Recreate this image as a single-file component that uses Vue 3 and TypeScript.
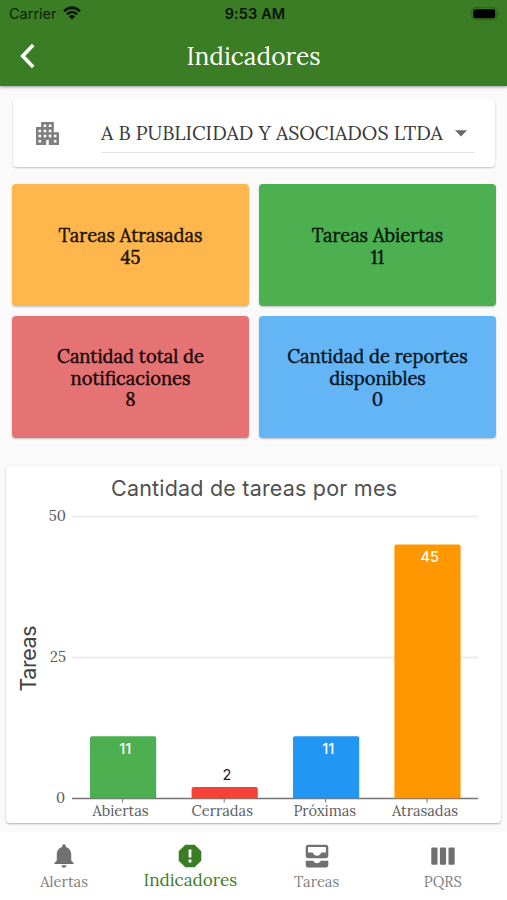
<script setup lang="ts">
interface Tile {
  tone: string
  lines: string[]
  value: number
}

interface Bar {
  label: string
  value: number
  color: string
  x: number
  labelX: number
  labelWidth: number
  inside: boolean
}

const tiles: Tile[] = [
  { tone: 'late', lines: ['Tareas Atrasadas'], value: 45 },
  { tone: 'open', lines: ['Tareas Abiertas'], value: 11 },
  { tone: 'notices', lines: ['Cantidad total de', 'notificaciones'], value: 8 },
  { tone: 'reports', lines: ['Cantidad de reportes', 'disponibles'], value: 0 },
]

const bars: Bar[] = [
  { label: 'Abiertas', value: 11, color: '#4caf50', x: 84, labelX: 86.5, labelWidth: 56, inside: true },
  { label: 'Cerradas', value: 2, color: '#f44336', x: 185.6, labelX: 185.5, labelWidth: 61.5, inside: false },
  { label: 'Próximas', value: 11, color: '#2196f3', x: 287, labelX: 287.5, labelWidth: 62.5, inside: true },
  { label: 'Atrasadas', value: 45, color: '#ff9800', x: 388.4, labelX: 386, labelWidth: 66, inside: true },
]

const baseline = 332.3
const unit = 5.64
const barWidth = 66.2

const topOf = (bar: Bar): number => baseline - bar.value * unit

const barPath = (bar: Bar): string => {
  const top = topOf(bar)
  const right = bar.x + barWidth
  return `M${bar.x} ${baseline}V${top + 2}q0-2 2-2H${right - 2}q2 0 2 2V${baseline}Z`
}
</script>

<template>
  <div class="screen">
    <header class="top">
      <div class="status">
        <div class="carrier">
          <span>Carrier</span>
          <svg width="18" height="14" viewBox="0 0 18 14">
            <g fill="none" stroke="#071203" stroke-width="2.5">
              <path d="M1 5.2Q9-2 17 5.2" />
              <path d="M3.9 8.2Q9 3.8 14.1 8.2" />
            </g>
            <path d="M5.8 10.2Q9 7.6 12.2 10.2L9 13.6Z" fill="#071203" />
          </svg>
        </div>
        <span class="clock">9:53 AM</span>
        <svg class="battery" width="30" height="14" viewBox="0 0 30 14">
          <rect x=".7" y=".7" width="25" height="12" rx="3.5" fill="none" stroke="#2b6119" />
          <rect x="2.2" y="2.2" width="22" height="9" rx="2" fill="#000" />
          <path d="M27.2 4.8q2.2 2 0 4z" fill="#2b6119" />
        </svg>
      </div>
      <div class="appbar">
        <svg class="back" width="16" height="26" viewBox="0 0 16 26">
          <path d="M13.2 1.9 2.7 13 13.2 24.1" fill="none" stroke="#fff" stroke-width="3.6" />
        </svg>
        <h1>Indicadores</h1>
      </div>
    </header>

    <main>
      <section class="picker">
        <svg class="building" viewBox="3 3 18 18">
          <path
            fill="#808080"
            d="M17 11V3H7v4H3v14h8v-4h2v4h8V11h-4zM7 19H5v-2h2v2zm0-4H5v-2h2v2zm0-4H5V9h2v2zm4 4H9v-2h2v2zm0-4H9V9h2v2zm0-4H9V5h2v2zm4 8h-2v-2h2v2zm0-4h-2V9h2v2zm0-4h-2V5h2v2zm4 12h-2v-2h2v2zm0-4h-2v-2h2v2z"
          />
        </svg>
        <div class="field">
          <span>A B PUBLICIDAD Y ASOCIADOS LTDA</span>
          <svg width="12" height="7" viewBox="0 0 12 7"><path d="M0 .3h12L6 6.5z" fill="#666" /></svg>
        </div>
      </section>

      <section class="tiles">
        <article v-for="tile in tiles" :key="tile.tone" class="tile" :class="tile.tone">
          <span v-for="line in tile.lines" :key="line">{{ line }}</span>
          <span>{{ tile.value }}</span>
        </article>
      </section>

      <section class="chart">
        <svg width="496" height="357" viewBox="0 0 496 357">
          <text class="title" x="105" y="30" textLength="286">Cantidad de tareas por mes</text>
          <text class="title side" transform="translate(30 225.5) rotate(-90)" textLength="66">Tareas</text>
          <g stroke="#ececec" stroke-width="2">
            <path d="M66 50.5H472" />
            <path d="M66 191.5H472" />
          </g>
          <g class="tick" text-anchor="end">
            <text x="60" y="54.5">50</text>
            <text x="60" y="196">25</text>
            <text x="59" y="336.5">0</text>
          </g>
          <path d="M66 332.5H472" stroke="#757575" stroke-width="1.6" />
          <g v-for="bar in bars" :key="bar.label">
            <path :d="barPath(bar)" :fill="bar.color" />
            <path :d="`M${bar.x + 32.6} 333v3.5`" stroke="#757575" />
            <text
              class="value"
              :class="{ inside: bar.inside }"
              :x="bar.x + 35.3"
              :y="topOf(bar) + (bar.inside ? 17.5 : -7.5)"
              text-anchor="middle"
            >{{ bar.value }}</text>
            <text class="tick" :x="bar.labelX" y="350" :textLength="bar.labelWidth">{{ bar.label }}</text>
          </g>
        </svg>
      </section>
    </main>

    <nav>
      <a class="item">
        <svg viewBox="2 2.25 20 20">
          <path d="M12 22c1.1 0 2-.9 2-2h-4c0 1.1.89 2 2 2zm6-6v-5c0-3.07-1.64-5.64-4.5-6.32V4c0-.83-.67-1.5-1.5-1.5s-1.5.67-1.5 1.5v.68C7.63 5.36 6 7.92 6 11v5l-2 2v1h16v-1l-2-2z" />
        </svg>
        <span>Alertas</span>
      </a>
      <a class="item active">
        <svg viewBox="0 0 24 24">
          <path fill-rule="evenodd" d="M7.3.7h9.4l6.6 6.6v9.4l-6.6 6.6H7.3L.7 16.7V7.3zM10.6 5.5v8h2.8v-8zm0 10v3h2.8v-3z" />
        </svg>
        <span>Indicadores</span>
      </a>
      <a class="item">
        <svg viewBox="0 0 24 24">
          <path fill-rule="evenodd" d="M3.500.7h17A2.800 2.800 0 0 1 23.300 3.500v8a2.800 2.800 0 0 1-2.800 2.800h-17A2.800 2.800 0 0 1 .7 11.500v-8A2.800 2.800 0 0 1 3.500.7zM3 3.800v4.700h4.700c.7 1.900 2.200 3.200 4.300 3.200s3.600-1.300 4.300-3.200H21V3.800a.8.8 0 0 0-.8-.8H3.800a.8.8 0 0 0-.8.800zM.7 16.700h7.500c.7 1.500 2 2.500 3.800 2.500s3.100-1 3.800-2.500h7.500v4a2.800 2.800 0 0 1-2.800 2.800h-17a2.800 2.800 0 0 1-2.800-2.800z" />
        </svg>
        <span>Tareas</span>
      </a>
      <a class="item">
        <svg viewBox="0 0 24 24">
          <rect x=".3" y="3.5" width="6.2" height="17.3" rx="1" />
          <rect x="8.9" y="3.5" width="6.2" height="17.3" rx="1" />
          <rect x="17.5" y="3.5" width="6.2" height="17.3" rx="1" />
        </svg>
        <span>PQRS</span>
      </a>
    </nav>
  </div>
</template>

<style>
body {
  margin: 0;
  background: #fafafa;
}
</style>

<style scoped>
.screen {
  width: 507px;
  height: 900px;
  display: flex;
  flex-direction: column;
  overflow: hidden;
  background: #fafafa;
  font-family: Lora, 'Liberation Serif', serif;
}
.top {
  height: 86px;
  flex: none;
  background: #3b7d24;
  box-shadow: 0 1px 3px rgba(0, 0, 0, 0.4);
}
.status {
  height: 28px;
  display: grid;
  grid-template-columns: 1fr auto 1fr;
  align-items: center;
  padding: 0 6px 0 9px;
  font: 14.5px/28px Inter, sans-serif;
  color: #0d2105;
}
.carrier {
  display: flex;
  align-items: center;
  gap: 6px;
}
.carrier svg {
  margin-bottom: 2px;
}
.clock {
  font-weight: 600;
  font-size: 14.5px;
  letter-spacing: 0.1px;
  color: #071203;
}
.battery {
  justify-self: end;
  margin-bottom: 1px;
}
.appbar {
  height: 56px;
  display: grid;
  grid-template-columns: 60px 1fr 60px;
  align-items: center;
}
.back {
  margin-left: 20px;
}
h1 {
  margin: 0;
  text-align: center;
  font-weight: 400;
  font-size: 24.5px;
  line-height: 30px;
  color: #fff;
}
main {
  flex: 1;
  padding: 13px 6px 0;
}
.picker {
  height: 68px;
  margin: 0 6px 0 7px;
  box-sizing: border-box;
  padding: 14px 20px 14px 23px;
  display: flex;
  gap: 42px;
  background: #fff;
  border-radius: 4px;
  box-shadow: 0 1px 2px rgba(0, 0, 0, 0.24);
}
.building {
  flex: none;
  width: 23px;
  height: 23px;
  margin-top: 8.5px;
}
.field {
  flex: 1;
  height: 39px;
  display: flex;
  align-items: center;
  justify-content: space-between;
  padding-right: 8px;
  border-bottom: 1px solid #e2e2e2;
  font-size: 19.57px;
  color: #383838;
  white-space: nowrap;
}
.field svg {
  margin-top: 1px;
}
.tiles {
  margin: 17px 6px 0;
  display: grid;
  grid-template-columns: 237px 237px;
  grid-auto-rows: 122px;
  gap: 10px;
}
.tile {
  box-sizing: border-box;
  padding-top: 3px;
  display: flex;
  flex-direction: column;
  align-items: center;
  justify-content: center;
  border-radius: 4px;
  box-shadow: 0 1px 2px rgba(0, 0, 0, 0.24);
  font-size: 18.35px;
  line-height: 21.5px;
  -webkit-text-stroke: 0.45px;
}
.late {
  background: #ffb74d;
  color: #1d1302;
}
.open {
  background: #4caf50;
  color: #081808;
}
.notices {
  background: #e57373;
  color: #1a0808;
}
.reports {
  background: #64b5f6;
  color: #061522;
}
.chart {
  height: 357px;
  margin-top: 28px;
  background: #fff;
  border-radius: 4px;
  box-shadow: 0 1px 2px rgba(0, 0, 0, 0.3);
}
.chart svg {
  display: block;
}
.title {
  font: 21.5px Inter, sans-serif;
  fill: #505050;
}
.side {
  fill: #424242;
}
.tick {
  font-size: 14.7px;
  fill: #5c5c5c;
}
.value {
  font: 14.5px Inter, sans-serif;
  fill: #212121;
}
.inside {
  font-weight: 500;
  fill: #fff;
}
nav {
  height: 68px;
  flex: none;
  box-sizing: border-box;
  padding: 0 1px;
  display: grid;
  grid-template-columns: repeat(4, 1fr);
  background: #fff;
}
.item {
  display: flex;
  flex-direction: column;
  align-items: center;
  padding-top: 12px;
  font-size: 14.7px;
  line-height: 20px;
  color: #808080;
}
.item svg {
  width: 24px;
  height: 24px;
  fill: #707070;
}
.item span {
  margin-top: 4px;
}
.active {
  font-size: 17.1px;
  color: #3b7d24;
}
.active svg {
  fill: #3b7d24;
}
.active span {
  margin-top: 2px;
}
</style>
